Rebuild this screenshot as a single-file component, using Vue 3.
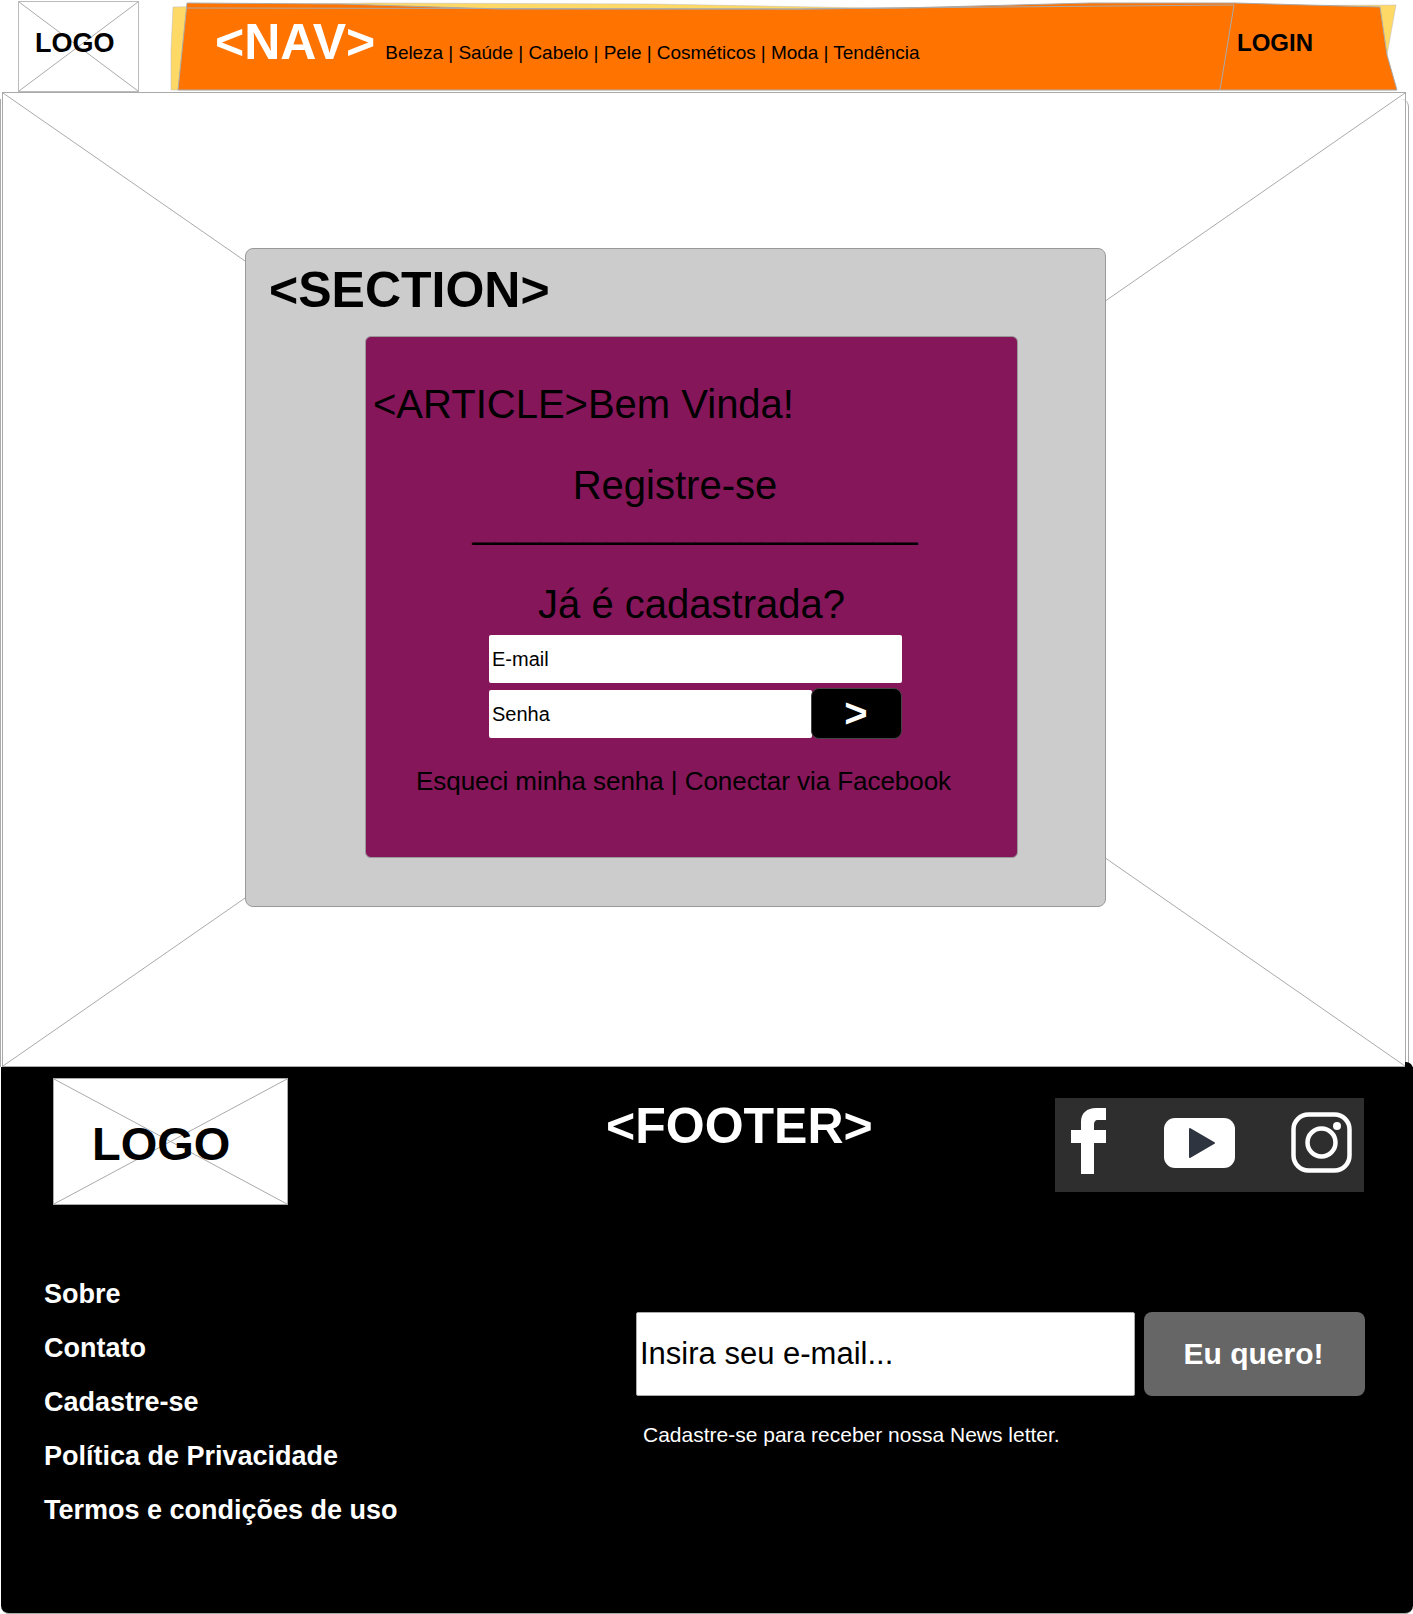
<script setup>
const navLinks = "Beleza | Saúde | Cabelo | Pele | Cosméticos | Moda | Tendência";
const footerLinks = ["Sobre", "Contato", "Cadastre-se", "Política de Privacidade", "Termos e condições de uso"];
</script>

<template>
  <div class="page">
    <header class="top">
      <div class="logo">
        <svg class="cross" viewBox="0 0 100 100" preserveAspectRatio="none">
          <path d="M0 0L100 100M100 0L0 100" vector-effect="non-scaling-stroke" />
        </svg>
        <span class="logo-text">LOGO</span>
      </div>
      <nav class="nav">
        <svg class="nav-bg" viewBox="0 0 1230 92" preserveAspectRatio="none">
          <polygon class="sticky" points="2,7 200,3 480,4 700,8 1225,5 1216,55 1225,90 0,90 0,50" />
          <polygon class="band" points="16,3 169,4 329,9 629,9 729,8 919,3 1064,3 1209,7 1216,55 1226,90 7,90" />
          <path class="band-line" d="M16 8L629 9L830 7L1063 5L1049 90" />
        </svg>
        <span class="nav-title">&lt;NAV&gt;</span>
        <span class="nav-links">{{ navLinks }}</span>
        <span class="login">LOGIN</span>
      </nav>
    </header>

    <main class="main">
      <svg class="cross" viewBox="0 0 100 100" preserveAspectRatio="none">
        <path d="M0 0L100 100M100 0L0 100" vector-effect="non-scaling-stroke" />
      </svg>
      <section class="section">
        <h2 class="section-title">&lt;SECTION&gt;</h2>
        <article class="article">
          <p class="line line-first">&lt;ARTICLE&gt;Bem Vinda!</p>
          <p class="line line-register">Registre-se</p>
          <p class="line line-rule">____________________</p>
          <p class="line line-login">Já é cadastrada?</p>
          <form class="form" @submit.prevent>
            <div class="field">E-mail</div>
            <div class="field-row">
              <div class="field field-pass">Senha</div>
              <button class="go">&gt;</button>
            </div>
          </form>
          <p class="forgot">Esqueci minha senha | Conectar via Facebook</p>
        </article>
      </section>
    </main>

    <footer class="footer">
      <div class="footer-top">
        <div class="footer-logo">
          <svg class="cross" viewBox="0 0 100 100" preserveAspectRatio="none">
            <path d="M0 0L100 100M100 0L0 100" vector-effect="non-scaling-stroke" />
          </svg>
          <span class="footer-logo-text">LOGO</span>
        </div>
        <h2 class="footer-title">&lt;FOOTER&gt;</h2>
        <div class="social">
          <svg class="ic-f" viewBox="0 0 35 66">
            <path d="M10 66V35H0V22H10V14C10 5 16 0 25 0H35V12H27C24 12 23 14 23 17V22H35V35H23V66Z" fill="#fff" />
          </svg>
          <svg class="ic-yt" viewBox="0 0 71 50">
            <rect width="71" height="50" rx="11" fill="#fff" />
            <path d="M26 11L50 25L26 39Z" fill="#2e3540" stroke="#2e3540" stroke-width="2" stroke-linejoin="round" />
          </svg>
          <svg class="ic-ig" viewBox="0 0 61 61" fill="none" stroke="#fff" stroke-width="4.500">
            <rect x="2.500" y="2.500" width="56" height="56" rx="15" />
            <circle cx="30.500" cy="30.500" r="14" />
            <circle cx="46" cy="14" r="4" fill="#fff" stroke="none" />
          </svg>
        </div>
      </div>
      <div class="footer-bottom">
        <ul class="footer-links">
          <li v-for="link in footerLinks" :key="link">{{ link }}</li>
        </ul>
        <div class="news">
          <div class="news-row">
            <div class="news-input">Insira seu e-mail...</div>
            <button class="news-btn">Eu quero!</button>
          </div>
          <p class="news-note">Cadastre-se para receber nossa News letter.</p>
        </div>
      </div>
    </footer>
  </div>
</template>

<style>
html, body {
  margin: 0;
  background: #fff;
}
</style>

<style scoped>
.page {
  width: 1413px;
  height: 1614px;
  overflow: hidden;
  font-family: "Liberation Sans", Arial, sans-serif;
  color: #000;
}

.cross {
  position: absolute;
  inset: 0;
  width: 100%;
  height: 100%;
}

.cross path {
  fill: none;
  stroke: #aaa;
  stroke-width: 1;
}

/* topo */
.top {
  display: flex;
  height: 92px;
}

.logo {
  position: relative;
  box-sizing: border-box;
  width: 121px;
  height: 91px;
  margin: 1px 0 0 18px;
  border: 1px solid #bbb;
  display: flex;
  align-items: center;
  padding: 0 0 6px 16px;
}

.logo-text {
  position: relative;
  font-size: 27px;
  font-weight: 700;
}

.nav {
  position: relative;
  margin-left: 32px;
  width: 1230px;
  display: flex;
  align-items: baseline;
  padding-left: 44px;
  box-sizing: border-box;
  height: 92px;
}

.nav-bg {
  position: absolute;
  inset: 0;
  width: 100%;
  height: 100%;
  overflow: visible;
}

.sticky {
  fill: #ffd966;
  stroke: #bbb;
  stroke-width: 0.500;
}

.band {
  fill: #ff7300;
  stroke: #aaa;
  stroke-width: 1;
}

.band-line {
  fill: none;
  stroke: #aaa;
  stroke-width: 1;
}

.nav-title {
  position: relative;
  font-size: 50px;
  font-weight: 700;
  color: #fff;
  line-height: 84px;
}

.nav-links {
  position: relative;
  margin-left: 10px;
  font-size: 19px;
  letter-spacing: -0.05px;
}

.login {
  position: relative;
  align-self: flex-start;
  margin: 29px 88px 0 auto;
  font-size: 24px;
  line-height: 28px;
  font-weight: 700;
}

/* principal */
.main {
  position: relative;
  box-sizing: border-box;
  width: 1404px;
  height: 975px;
  margin-left: 2px;
  padding: 155px 0 0 242px;
  border: 1px solid #aaa;
}

/* contorno de tras do wireframe */
.main::after {
  content: "";
  position: absolute;
  top: 6px;
  bottom: -1px;
  left: -3px;
  right: -4px;
  border: solid #aaa;
  border-width: 0 1px;
  border-top-right-radius: 8px;
}

.section {
  position: relative;
  box-sizing: border-box;
  width: 861px;
  height: 659px;
  background: #ccc;
  border: 1px solid #999;
  border-radius: 8px;
}

.section-title {
  margin: 0;
  padding: 12px 0 0 23px;
  font-size: 50px;
  line-height: 58px;
  font-weight: 700;
}

.article {
  box-sizing: border-box;
  width: 653px;
  height: 522px;
  margin: 17px 0 0 119px;
  padding-top: 45px;
  background: #85165a;
  border: 1px solid #999;
  border-radius: 6px;
}

.line {
  margin: 0;
  font-size: 40px;
  line-height: 44px;
  text-align: center;
}

.line-first {
  text-align: left;
  padding-left: 7px;
}

.line-register {
  margin-top: 37px;
  width: 618px;
}

.line-rule {
  margin-top: -6px;
  height: 44px;
  padding-left: 7px;
}

.line-login {
  margin-top: 37px;
}

.form {
  margin: 9px 0 0 123px;
  width: 413px;
}

.field {
  box-sizing: border-box;
  height: 48px;
  padding-left: 3px;
  background: #fff;
  border-radius: 2px;
  font-size: 20px;
  line-height: 48px;
}

.field-row {
  display: flex;
  margin-top: 6px;
}

.field-pass {
  width: 323px;
  margin-top: 1px;
}

.go {
  width: 91px;
  height: 51px;
  margin: -1px 0 0 -1px;
  padding: 0 1px 2px 0;
  background: #000;
  color: #fff;
  border: 1px solid #444;
  border-radius: 8px;
  font-family: inherit;
  font-size: 40px;
  font-weight: 700;
  line-height: 44px;
}

.forgot {
  margin: 26px 0 0 50px;
  font-size: 26px;
  line-height: 32px;
  letter-spacing: -0.05px;
}

/* rodape */
.footer {
  position: relative;
  box-sizing: border-box;
  width: 1412px;
  height: 547px;
  margin-left: 1px;
  background: #000;
  color: #fff;
  border-bottom: 1px solid #aaa;
  border-radius: 0 0 8px 8px;
}

.footer::before {
  content: "";
  position: absolute;
  top: -5px;
  right: 0;
  width: 8px;
  height: 12px;
  background: #000;
  border-top-right-radius: 7px;
}

.footer-top {
  display: flex;
  align-items: flex-start;
  padding-top: 11px;
}

.footer-logo {
  position: relative;
  box-sizing: border-box;
  width: 235px;
  height: 127px;
  margin-left: 52px;
  background: #fff;
  border: 1px solid #aaa;
  display: flex;
  align-items: center;
  padding: 4px 0 0 38px;
  color: #000;
}

.footer-logo-text {
  position: relative;
  font-size: 47px;
  font-weight: 700;
}

.footer-title {
  margin: 19px 0 0 318px;
  width: 266px;
  font-size: 50px;
  line-height: 58px;
  font-weight: 700;
  white-space: nowrap;
}

.social {
  box-sizing: border-box;
  display: flex;
  align-items: flex-start;
  width: 309px;
  height: 94px;
  margin: 20px 0 0 183px;
  padding-left: 16px;
  background: #2e2e2e;
}

.ic-f {
  width: 35px;
  height: 66px;
  margin-top: 10px;
}

.ic-yt {
  width: 71px;
  height: 50px;
  margin: 20px 0 0 58px;
}

.ic-ig {
  width: 61px;
  height: 61px;
  margin: 14px 0 0 56px;
}

.footer-bottom {
  display: flex;
  align-items: flex-start;
  margin-top: 62px;
}

.footer-links {
  list-style: none;
  width: 635px;
  margin: 0;
  padding: 0 0 0 43px;
  box-sizing: border-box;
  font-size: 27px;
  font-weight: 700;
}

.footer-links li {
  height: 54px;
  line-height: 54px;
}

.news {
  padding-top: 45px;
}

.news-row {
  display: flex;
  gap: 9px;
}

.news-input {
  box-sizing: border-box;
  width: 499px;
  height: 84px;
  padding-left: 3px;
  background: #fff;
  color: #000;
  border: 1px solid #aaa;
  border-radius: 2px;
  font-size: 31px;
  line-height: 82px;
}

.news-btn {
  width: 221px;
  height: 84px;
  padding: 0 2px 0 0;
  background: #666;
  color: #fff;
  border: none;
  border-radius: 8px;
  font-family: inherit;
  font-size: 30px;
  font-weight: 700;
}

.news-note {
  margin: 27px 0 0 7px;
  font-size: 21px;
  line-height: 24px;
}
</style>
